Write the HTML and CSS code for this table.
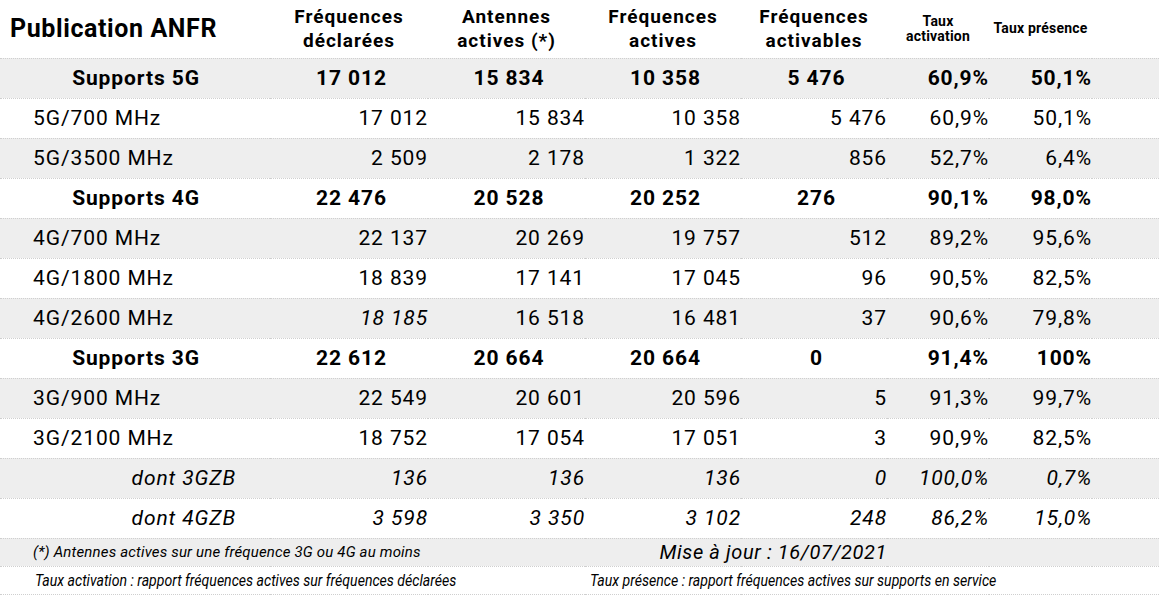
FILE: index.html
```html
<!DOCTYPE html>
<html lang="fr">
<head>
<meta charset="utf-8">
<title>Publication ANFR</title>
<link rel="stylesheet" href="styles.css">
</head>
<body>
<table class="anfr">
  <colgroup>
    <col class="c-label"><col class="c-num1"><col class="c-num2"><col class="c-num3"><col class="c-num4"><col class="c-pct1"><col class="c-pct2"><col class="c-rest">
  </colgroup>
  <thead>
    <tr class="head">
      <th class="title">Publication ANFR</th>
      <th class="colhead">Fréquences<br>déclarées</th>
      <th class="colhead">Antennes<br>actives (*)</th>
      <th class="colhead">Fréquences<br>actives</th>
      <th class="colhead">Fréquences<br>activables</th>
      <th class="colhead small">Taux<br>activation</th>
      <th class="colhead small">Taux présence</th>
      <th></th>
    </tr>
  </thead>
  <tbody>
    <tr class="group">
      <td class="lbl">Supports 5G</td><td>17 012</td><td>15 834</td><td>10 358</td><td>5 476</td><td class="pct">60,9%</td><td class="pct">50,1%</td><td></td>
    </tr>
    <tr class="sub">
      <td class="lbl">5G/700 MHz</td><td>17 012</td><td>15 834</td><td>10 358</td><td>5 476</td><td>60,9%</td><td>50,1%</td><td></td>
    </tr>
    <tr class="sub">
      <td class="lbl">5G/3500 MHz</td><td>2 509</td><td>2 178</td><td>1 322</td><td>856</td><td>52,7%</td><td>6,4%</td><td></td>
    </tr>
    <tr class="group">
      <td class="lbl">Supports 4G</td><td>22 476</td><td>20 528</td><td>20 252</td><td>276</td><td class="pct">90,1%</td><td class="pct">98,0%</td><td></td>
    </tr>
    <tr class="sub">
      <td class="lbl">4G/700 MHz</td><td>22 137</td><td>20 269</td><td>19 757</td><td>512</td><td>89,2%</td><td>95,6%</td><td></td>
    </tr>
    <tr class="sub">
      <td class="lbl">4G/1800 MHz</td><td>18 839</td><td>17 141</td><td>17 045</td><td>96</td><td>90,5%</td><td>82,5%</td><td></td>
    </tr>
    <tr class="sub">
      <td class="lbl">4G/2600 MHz</td><td class="it">18 185</td><td>16 518</td><td>16 481</td><td>37</td><td>90,6%</td><td>79,8%</td><td></td>
    </tr>
    <tr class="group">
      <td class="lbl">Supports 3G</td><td>22 612</td><td>20 664</td><td>20 664</td><td>0</td><td class="pct">91,4%</td><td class="pct">100%</td><td></td>
    </tr>
    <tr class="sub">
      <td class="lbl">3G/900 MHz</td><td>22 549</td><td>20 601</td><td>20 596</td><td>5</td><td>91,3%</td><td>99,7%</td><td></td>
    </tr>
    <tr class="sub">
      <td class="lbl">3G/2100 MHz</td><td>18 752</td><td>17 054</td><td>17 051</td><td>3</td><td>90,9%</td><td>82,5%</td><td></td>
    </tr>
    <tr class="sub zb">
      <td class="lbl">dont 3GZB</td><td>136</td><td>136</td><td>136</td><td>0</td><td>100,0%</td><td>0,7%</td><td></td>
    </tr>
    <tr class="sub zb">
      <td class="lbl">dont 4GZB</td><td>3 598</td><td>3 350</td><td>3 102</td><td>248</td><td>86,2%</td><td>15,0%</td><td></td>
    </tr>
    <tr class="note">
      <td colspan="3" class="footnote">(*) Antennes actives sur une fréquence 3G ou 4G au moins</td>
      <td colspan="2" class="update">Mise à jour : 16/07/2021</td>
      <td colspan="3"></td>
    </tr>
    <tr class="def">
      <td colspan="3"><span class="narrow">Taux activation : rapport fréquences actives sur fréquences déclarées</span></td>
      <td colspan="5"><span class="narrow">Taux présence : rapport fréquences actives sur supports en service</span></td>
    </tr>
  </tbody>
</table>
</body>
</html>
```

FILE: styles.css
```css
html, body {
  margin: 0;
  padding: 0;
  background: #ffffff;
}

body {
  font-family: Roboto, "Liberation Sans", Arial, sans-serif;
  color: #000000;
  width: 1159px;
  height: 596px;
  overflow: hidden;
}

.anfr {
  width: 1159px;
  border-collapse: collapse;
  table-layout: fixed;
}

.c-label { width: 270px; }
.c-num1 { width: 158px; }
.c-num2 { width: 157px; }
.c-num3 { width: 156px; }
.c-num4 { width: 146px; }
.c-pct1 { width: 102px; }
.c-pct2 { width: 103px; }
.c-rest { width: 67px; }

.anfr th,
.anfr td {
  padding: 0;
  white-space: nowrap;
  vertical-align: middle;
}

.anfr tr {
  border-bottom: 1px dotted #cfcfcf;
}

/* header */
.head {
  height: 58px;
}

.anfr .title {
  text-align: left;
  padding-left: 10px;
  font-size: 25px;
  font-weight: 700;
  letter-spacing: 0.6px;
}

.colhead {
  text-align: center;
  font-size: 19px;
  line-height: 24px;
  font-weight: 700;
  letter-spacing: 1px;
}

.colhead.small {
  font-size: 14px;
  line-height: 15px;
  letter-spacing: 0.2px;
}

/* body rows */
.anfr tbody tr:nth-child(odd) {
  background: #eeeeee;
}

.group,
.sub {
  height: 40px;
}

.anfr tbody td {
  font-size: 21px;
  letter-spacing: 0.9px;
  text-align: right;
}

.anfr tbody .group td {
  font-weight: 700;
  text-align: center;
  padding-left: 5px;
}

.anfr tbody .group td.lbl {
  padding-left: 2px;
}

.anfr tbody .group td.pct {
  text-align: right;
  padding-left: 0;
}

.anfr tbody .sub td.lbl {
  text-align: left;
  padding-left: 33px;
}

.anfr tbody .zb td {
  font-style: italic;
}

.anfr tbody .zb td.lbl {
  text-align: right;
  padding-right: 34px;
}

.anfr tbody td.it {
  font-style: italic;
}

/* footer rows */
.note,
.def {
  height: 28px;
}

.anfr tbody .note td {
  font-style: italic;
}

.anfr tbody .note td.footnote {
  text-align: left;
  padding-left: 33px;
  font-size: 15px;
  letter-spacing: 0.17px;
}

.anfr tbody .note td.update {
  text-align: right;
  font-size: 20px;
  letter-spacing: 0.6px;
}

.anfr tbody .def td {
  text-align: left;
  padding-left: 35px;
  font-size: 16px;
  letter-spacing: 0;
}

.anfr tbody .def td + td {
  padding-left: 5px;
}

.narrow {
  display: inline-block;
  font-style: italic;
  transform: scaleX(0.88);
  transform-origin: left center;
}
```
